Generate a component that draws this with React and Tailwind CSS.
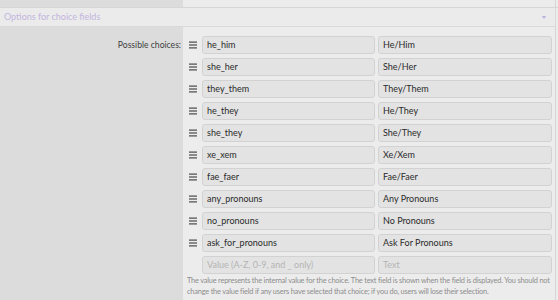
import { memo } from 'react';

const choices = [
  ['he_him', 'He/Him'],
  ['she_her', 'She/Her'],
  ['they_them', 'They/Them'],
  ['he_they', 'He/They'],
  ['she_they', 'She/They'],
  ['xe_xem', 'Xe/Xem'],
  ['fae_faer', 'Fae/Faer'],
  ['any_pronouns', 'Any Pronouns'],
  ['no_pronouns', 'No Pronouns'],
  ['ask_for_pronouns', 'Ask For Pronouns'],
];

const Grip = () => (
  <svg className="w-[8px] h-[8px] text-[#4a4a4a]" viewBox="0 0 8 8" fill="currentColor">
    <rect x="0" y="0.5" width="8" height="1.2" />
    <rect x="0" y="3.4" width="8" height="1.2" />
    <rect x="0" y="6.3" width="8" height="1.2" />
  </svg>
);

const Field = ({ value, placeholder, className }) => (
  <div
    className={`h-[18px] flex items-center px-[4px] rounded-[3px] border border-[#d2d2d2] bg-[#e3e3e3] text-[9px] ${
      value ? 'text-[#2a2a2a]' : 'text-[#b4b4b4]'
    } ${className}`}
  >
    {value || placeholder}
  </div>
);

const App = () => {
  return (
    <div className="w-[558px] h-[300px] overflow-hidden bg-[#ececec] font-['Lato',sans-serif]">
      {/* Top strip */}
      <div className="flex h-[8px] border-b border-[#d6d6d6]">
        <div className="w-[183px] bg-[#dcdcdc]" />
        <div className="flex-1 bg-[#ececec] border-r border-[#d6d6d6] mr-[2px]" />
      </div>

      {/* Section header */}
      <div className="h-[19px] flex items-center justify-between pl-[4px] pr-[9px] bg-[#ebebeb] border-b border-[#d9d9d9] border-r mr-[2px]">
        <span className="text-[9px] text-[#c2b6de]">Options for choice fields</span>
        <svg className="w-[4px] h-[3px]" viewBox="0 0 4 3" fill="#b9aedb">
          <path d="M0 0h4L2 3z" />
        </svg>
      </div>

      {/* Body */}
      <div className="flex h-[273px]">
        <div className="w-[183px] bg-[#dcdcdc] flex justify-end pt-[9px] pr-[2px]">
          <div className="h-[18px] flex items-center text-[8.6px] text-[#3c3c3c]">Possible choices:</div>
        </div>
        <div className="flex-1 bg-[#ececec] border-r border-[#d6d6d6] mr-[2px] pt-[9px] pl-[6px] pr-[3px]">
          <div className="flex flex-col gap-[4px]">
            {choices.map(([value, text]) => (
              <div key={value} className="flex items-center">
                <div className="w-[13px] flex items-center">
                  <Grip />
                </div>
                <Field value={value} className="w-[173px]" />
                <Field value={text} className="w-[174px] ml-[3px]" />
              </div>
            ))}
            <div className="flex items-center">
              <div className="w-[13px]" />
              <Field placeholder="Value (A-Z, 0-9, and _ only)" className="w-[173px]" />
              <Field placeholder="Text" className="w-[174px] ml-[3px]" />
            </div>
          </div>
          <p className="mt-[1px] -ml-[2px] -mr-[2px] text-[7.4px] leading-[11px] tracking-[-0.2px] text-[#8c8c8c]">
            The value represents the internal value for the choice. The text field is shown when the field is displayed. You should not change the value field if any users have selected that choice; if you do, users will lose their selection.
          </p>
        </div>
      </div>
    </div>
  );
};

export default memo(App);
